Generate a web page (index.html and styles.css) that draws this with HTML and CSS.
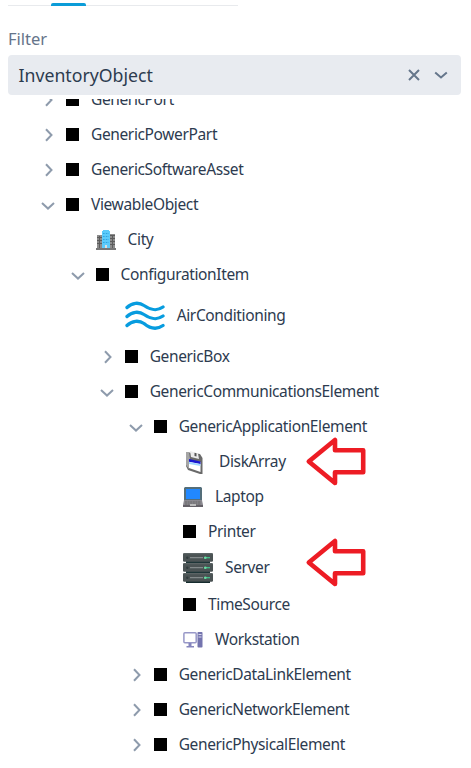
FILE: index.html
```html
<!DOCTYPE html>
<html lang="en">
<head>
<meta charset="utf-8">
<title>Inventory</title>
<link rel="stylesheet" href="styles.css">
</head>
<body>
<svg class="defs" width="0" height="0" aria-hidden="true">
  <symbol id="right" viewBox="0 0 14 14"><path d="M5 1.2 L10.5 7 L5 12.8"/></symbol>
  <symbol id="down" viewBox="0 0 14 14"><path d="M1 5 L7 10.6 L13 5"/></symbol>
  <symbol id="pointer" viewBox="0 0 62 50"><path d="M4.8 25.5 L31 4 V14.3 H59.2 V36.3 H31 V47 Z"/></symbol>
</svg>
<div class="tabs"><span class="tab-active"></span></div>
<label class="label">Filter</label>
<div class="combo">
  <span class="value">InventoryObject</span>
  <svg class="clear" viewBox="0 0 12 12"><path d="M1 1 L11 11 M11 1 L1 11"/></svg>
  <svg class="open" viewBox="0 0 14 14"><path d="M1.2 4.5 L7 9.5 L12.8 4.5"/></svg>
</div>
<div class="tree">
  <div class="row l0"><svg class="toggle"><use href="#right"/></svg><i class="box"></i><span>GenericPort</span></div>
  <div class="row l0"><svg class="toggle"><use href="#right"/></svg><i class="box"></i><span>GenericPowerPart</span></div>
  <div class="row l0"><svg class="toggle"><use href="#right"/></svg><i class="box"></i><span>GenericSoftwareAsset</span></div>
  <div class="row l0"><svg class="toggle"><use href="#down"/></svg><i class="box"></i><span>ViewableObject</span></div>
  <div class="row l1"><b class="toggle"></b>
    <svg class="icon" width="20" height="20" viewBox="0 0 20 20"><path fill="#8c8c8c" d="M1 5H7V18H1zM13 4H19V18H13z"/><path stroke="#5c5c5c" stroke-width="1" d="M1 7.5H7M1 10.5H7M1 13.5H7M13 5.5H19M13 8.5H19M13 11.5H19M13 14.5H19M3.5 6V18M16.5 5V18"/><path fill="#5ccbfa" d="M7 0H13V1H14V18H6V1H7z"/><path stroke="#2fa5e0" stroke-width="1" stroke-dasharray="1.6 1.2" d="M7 3.5H13M7 6.5H13M7 9.5H13M7 12.5H13"/><path fill="#ddd" d="M9 15H11V18H9z"/><path fill="#777" d="M0 18H20V20H0z"/></svg>
    <span>City</span></div>
  <div class="row l1"><svg class="toggle"><use href="#down"/></svg><i class="box"></i><span>ConfigurationItem</span></div>
  <div class="row l2 tall"><b class="toggle"></b>
    <svg class="icon" width="40" height="40" viewBox="0 0 40 40"><g fill="none" stroke="#079cdf" stroke-width="3.3" stroke-linecap="round"><path d="M2 11.5C7 6.5 14 6 19 9.5C25 13.5 31 16 38 11"/><path d="M2 20.5C7 15.5 14 15 19 18.5C25 22.5 31 25 38 20"/><path d="M2 29.5C7 24.5 14 24 19 27.5C25 32.5 31 34.5 38 29.5"/></g></svg>
    <span>AirConditioning</span></div>
  <div class="row l2"><svg class="toggle"><use href="#right"/></svg><i class="box"></i><span>GenericBox</span></div>
  <div class="row l2"><svg class="toggle"><use href="#down"/></svg><i class="box"></i><span>GenericCommunicationsElement</span></div>
  <div class="row l3"><svg class="toggle"><use href="#down"/></svg><i class="box"></i><span>GenericApplicationElement</span></div>
  <div class="row l4"><b class="toggle"></b>
    <svg class="icon" width="24" height="24" viewBox="0 0 24 24"><path fill="#6a6a6a" d="M3 2L17 4L19.500 8L19.500 24L17 24L5 20L3 16z"/><path fill="#a5a5a5" d="M3 2L6 2L7 9L6 19L3 15z"/><path fill="#ececec" d="M7 1L15 3.500L16 9L8 7z"/><path fill="#555" d="M11.500 2.700L13.500 3.300V6.500L11.500 6z"/><path fill="#fff" d="M6 10L17.500 12L17.500 22L6 18z"/><path fill="#1717d2" d="M6 9L17.500 11.500V14L6 11.700z"/><path fill="#9ed7ff" d="M6 12L17.500 14.300V16L6 14z"/></svg>
    <span>DiskArray</span></div>
  <div class="row l4"><b class="toggle"></b>
    <svg class="icon" width="20" height="20" viewBox="0 0 20 20"><path fill="#546e7a" d="M2 0H18L19 1V14H1V1z"/><path fill="#2188ff" d="M3 2H17V12H3z"/><path fill="#8b8990" d="M1 13H19L20 18V20H0V18z"/><path stroke="#666" d="M2 15H18M2 17H18" stroke-dasharray="2 .6"/><path fill="#646067" d="M0 18H20V20H0z"/><path fill="#bbb" d="M7 17H13V19H7z"/></svg>
    <span>Laptop</span></div>
  <div class="row l4"><b class="toggle"></b><i class="box"></i><span>Printer</span></div>
  <div class="row l4 mid"><b class="toggle"></b>
    <svg class="icon" width="30" height="30" viewBox="0 0 30 30"><path fill="#1d3638" d="M3 7H27V30H3z"/><g id="unit"><rect width="30" height="8.7" rx="1.2" fill="#4b5354"/><path stroke="#606969" d="M1 .7H29"/><path stroke="#909898" d="M7 4.700H20"/><circle cx="4.300" cy="4.700" r="1.200" fill="#303b3d"/><path stroke="#43c78c" stroke-width="1.200" d="M21 4.700H27"/><circle cx="22.300" cy="4.700" r="1.300" fill="#6bdba5"/></g><use href="#unit" y="10"/><use href="#unit" y="20"/><path fill="#152c2e" d="M3 28.800H27V30H3z"/></svg>
    <span>Server</span></div>
  <div class="row l4"><b class="toggle"></b><i class="box"></i><span>TimeSource</span></div>
  <div class="row l4"><b class="toggle"></b>
    <svg class="icon" width="20" height="20" viewBox="0 0 20 20"><rect x=".9" y="2.700" width="12.300" height="10" rx="1" fill="#fff" stroke="#9898c8" stroke-width="1.500"/><path fill="#8585bd" d="M5.500 13H8.500V16H11V17.500H3.500V16H5.500z"/><rect x="14.500" y="2" width="5" height="15.600" rx=".8" fill="#7474ae"/><path stroke="#d8d8ee" d="M15.500 4.500H18.500M15.500 7H18.500"/></svg>
    <span>Workstation</span></div>
  <div class="row l3"><svg class="toggle"><use href="#right"/></svg><i class="box"></i><span>GenericDataLinkElement</span></div>
  <div class="row l3"><svg class="toggle"><use href="#right"/></svg><i class="box"></i><span>GenericNetworkElement</span></div>
  <div class="row l3"><svg class="toggle"><use href="#right"/></svg><i class="box"></i><span>GenericPhysicalElement</span></div>
</div>
<svg class="pointer first"><use href="#pointer"/></svg>
<svg class="pointer second"><use href="#pointer"/></svg>
</body>
</html>
```
FILE: styles.css
```css
* { box-sizing: border-box; }
body {
  position: relative;
  margin: 0;
  padding: 0 10px 0 8px;
  height: 768px;
  overflow: hidden;
  background: #fff;
  color: #2d3b4f;
  font-family: "Noto Sans", sans-serif;
}
.defs { display: block; }
.tabs { width: 230px; height: 6px; border-bottom: 1px solid #e8eaed; }
.tab-active {
  display: block;
  width: 35px;
  height: 3px;
  margin-left: 43px;
  transform: translateY(3px);
  border-radius: 2px 2px 0 0;
  background: #0b9cd8;
}
.label {
  display: block;
  height: 49px;
  padding-top: 21px;
  font-size: 16.5px;
  line-height: 24px;
  color: #65748a;
}
.combo {
  display: flex;
  align-items: center;
  height: 40px;
  padding: 0 13px 0 10.5px;
  border-radius: 4px;
  background: #e8ebf0;
}
.value { flex: 1; padding-bottom: 1px; font-size: 17.7px; line-height: 24px; }
.clear, .open { fill: none; stroke: #65768b; stroke-width: 2; }
.clear { width: 12px; height: 12px; margin-right: 14px; }
.open { width: 14px; height: 14px; }
.tree { height: 669px; margin-top: 4px; overflow: hidden; }
.row {
  display: flex;
  align-items: center;
  height: 35px;
  font-size: 15.5px;
  letter-spacing: -0.37px;
  white-space: nowrap;
}
.row:first-child { margin-top: -17px; }
.row.tall { height: 47px; }
.row.mid { height: 38px; }
.l0 { padding-left: 33px; }
.l1 { padding-left: 62.6px; }
.l2 { padding-left: 91.7px; }
.l3 { padding-left: 120.7px; }
.l4 { padding-left: 150px; }
.toggle {
  flex: none;
  width: 14px;
  height: 14px;
  margin-right: 11px;
  fill: none;
  stroke: #8e9bac;
  stroke-width: 2;
}
.box { flex: none; width: 13px; height: 13px; background: #000; }
.icon { flex: none; }
.row span { margin-left: 12px; padding-bottom: 2px; }
.pointer {
  position: absolute;
  left: 304px;
  width: 62px;
  height: 50px;
  fill: none;
  stroke: #ed1c24;
  stroke-width: 4.6;
  stroke-linejoin: round;
}
.first { top: 436px; }
.second { top: 537px; }
```
